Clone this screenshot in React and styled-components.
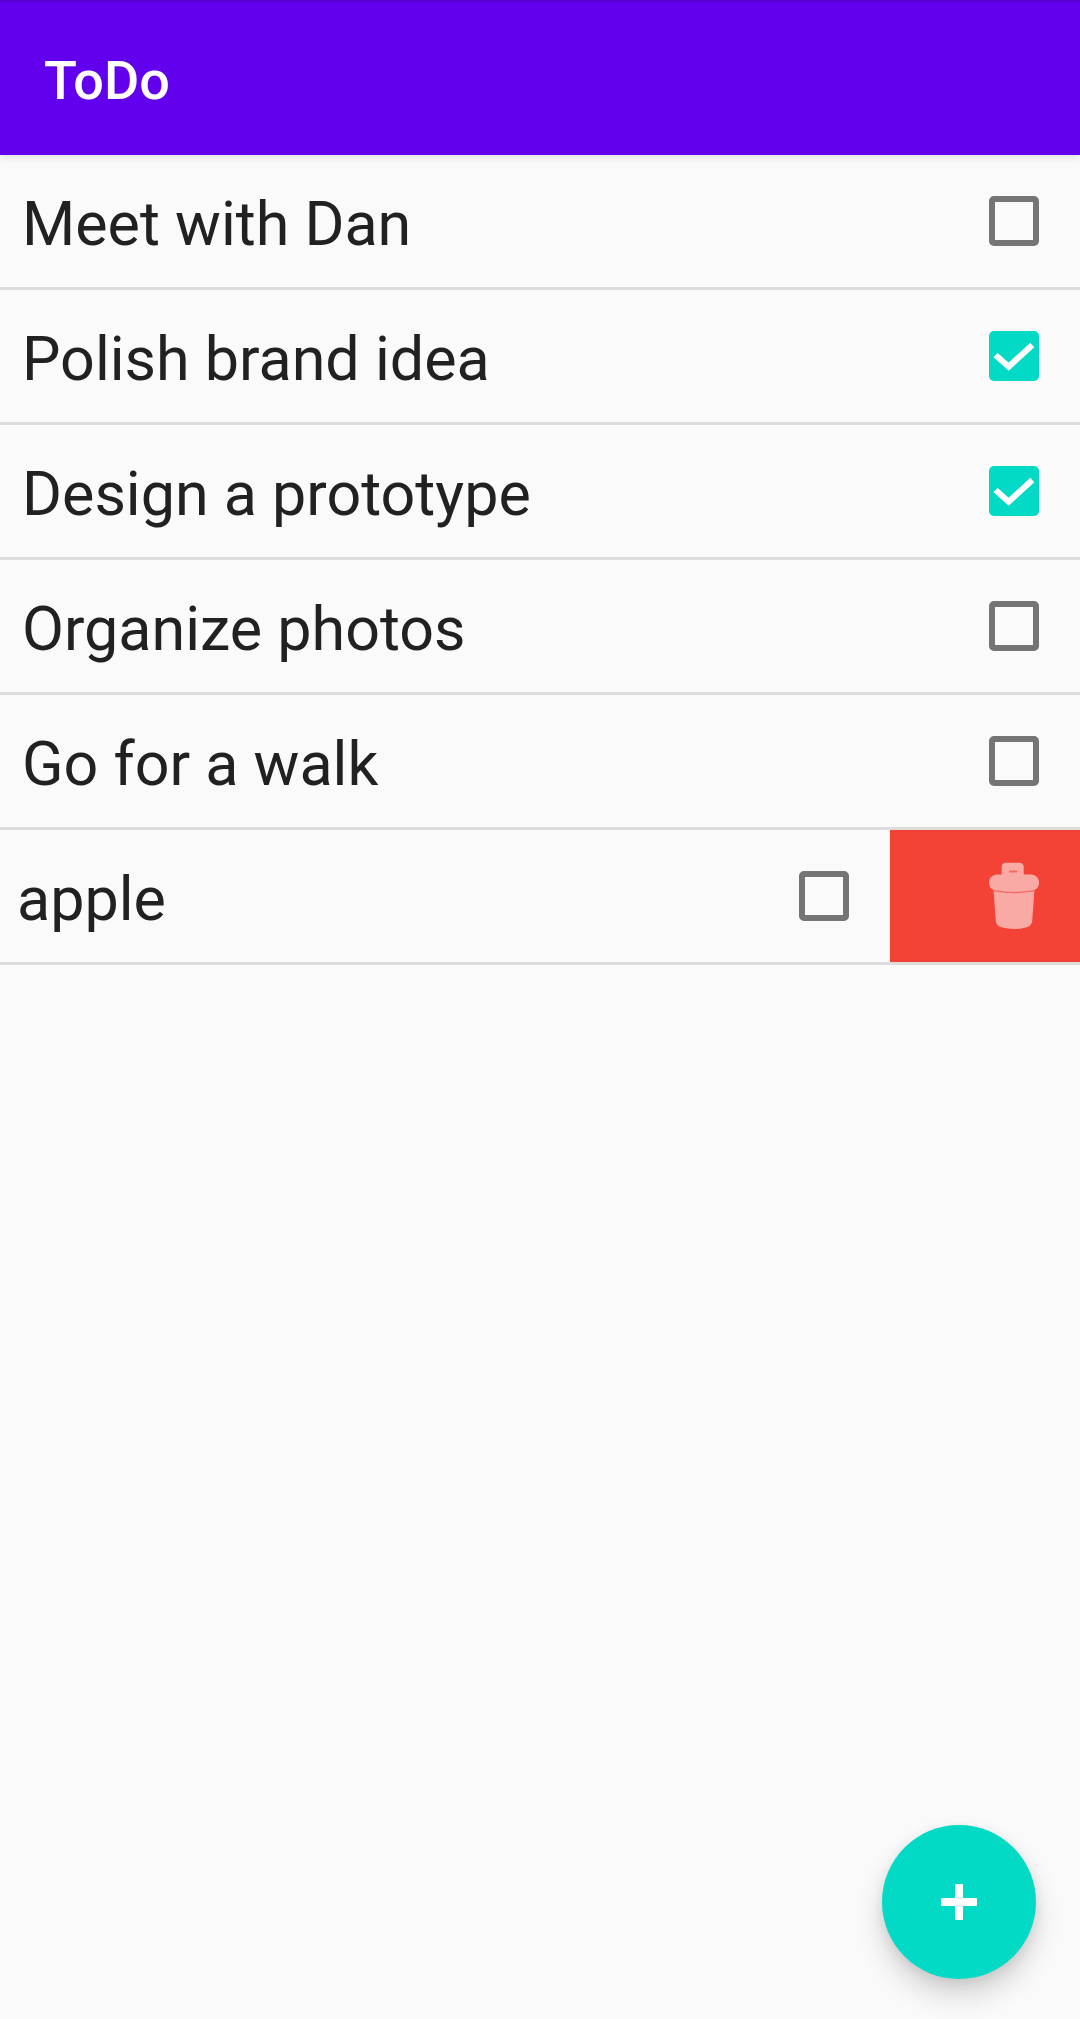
import React from 'react'
import styled, { createGlobalStyle } from 'styled-components'

const GlobalStyle = createGlobalStyle`
  html, body {
    margin: 0;
    padding: 0;
    background-color: #fafafa;
  }
  body {
    font-family: Roboto, "Liberation Sans", sans-serif;
  }
`

const Screen = styled.div`
  position: relative;
  width: 1080px;
  height: 2019px;
  overflow: hidden;
  display: flex;
  flex-direction: column;
  background-color: #fafafa;
`

const AppBar = styled.header`
  height: 155px;
  flex-shrink: 0;
  box-sizing: border-box;
  padding: 4px 0 0 44px;
  display: flex;
  align-items: center;
  background-color: #6200ee;
  border-top: 2px solid #5600d2;
  box-shadow: 0 2px 8px rgba(0, 0, 0, .12);
  color: #fff;
  font-size: 54px;
  font-weight: 500;
  z-index: 1;
`

const TaskList = styled.ul`
  list-style: none;
  margin: 0;
  padding: 0;
`

const Row = styled.li`
  height: 132px;
  display: flex;
  border-bottom: 3px solid #dcdcdc;
`

const RowContent = styled.div`
  flex: 1;
  display: flex;
  align-items: center;
  justify-content: space-between;
  padding-left: ${props => props.$swiped ? '17px' : '22px'};
  padding-right: 41px;
`

const TaskLabel = styled.span`
  color: #212121;
  font-size: 61px;
  padding-top: 5px;
`

const Box = styled.span`
  width: 50px;
  height: 50px;
  box-sizing: border-box;
  border-radius: 5px;
  border: ${props => props.$checked ? 'none' : '6px solid #757575'};
  background-color: ${props => props.$checked ? '#03dac5' : 'transparent'};
  display: flex;
`

const DeleteAction = styled.div`
  width: 190px;
  display: flex;
  align-items: center;
  justify-content: flex-end;
  padding-right: 41px;
  box-sizing: border-box;
  background-color: #f44336;
`

const TrashSvg = styled.svg`
  opacity: .55;
`

const Fab = styled.button`
  position: absolute;
  left: 882px;
  top: 1825px;
  width: 154px;
  height: 154px;
  padding: 0;
  border: none;
  border-radius: 50%;
  background-color: #03dac5;
  box-shadow: 0 16px 28px rgba(0, 0, 0, .16), 0 4px 12px rgba(0, 0, 0, .08);
  display: flex;
  align-items: center;
  justify-content: center;
`

const CheckMark = () => (
  <svg width="50" height="50" viewBox="0 0 50 50" fill="none">
    <path d="M6.5 24 L19.7 35.7 L43.3 14" stroke="#fff" strokeWidth="6" />
  </svg>
)

const TrashIcon = () => (
  <TrashSvg width="50" height="68" viewBox="0 0 154 205" fill="#fff">
    <path d="M39 40 V14 Q39 0 53 0 H93 Q107 0 107 14 V40 Z" />
    <path d="M0 62 Q0 40 22 36 H132 Q154 40 154 62 Q154 78 140 84 L133 180 Q131 194 116 199 Q77 210 38 199 Q23 194 21 180 L14 84 Q0 78 0 62 Z" />
    <path d="M14 86 Q77 98 140 86" fill="none" stroke="#f9857c" strokeWidth="4" />
    <rect x="62" y="24" width="25" height="6" fill="#f9857c" />
  </TrashSvg>
)

const PlusIcon = () => (
  <svg width="38" height="38" viewBox="0 0 38 38" fill="#fff">
    <rect x="15" y="1" width="8" height="36" rx="1" />
    <rect x="1" y="15" width="36" height="8" rx="1" />
  </svg>
)

const tasks = [
  { title: 'Meet with Dan', done: false },
  { title: 'Polish brand idea', done: true },
  { title: 'Design a prototype', done: true },
  { title: 'Organize photos', done: false },
  { title: 'Go for a walk', done: false },
  { title: 'apple', done: false, swiped: true },
]

export default function App() {
  return (
    <Screen>
      <GlobalStyle />
      <AppBar>ToDo</AppBar>
      <TaskList>
        {tasks.map((task, idx) => (
          <Row key={idx}>
            <RowContent $swiped={task.swiped}>
              <TaskLabel>{task.title}</TaskLabel>
              <Box $checked={task.done}>{task.done && <CheckMark />}</Box>
            </RowContent>
            {task.swiped && (
              <DeleteAction>
                <TrashIcon />
              </DeleteAction>
            )}
          </Row>
        ))}
      </TaskList>
      <Fab aria-label="Add">
        <PlusIcon />
      </Fab>
    </Screen>
  )
}
